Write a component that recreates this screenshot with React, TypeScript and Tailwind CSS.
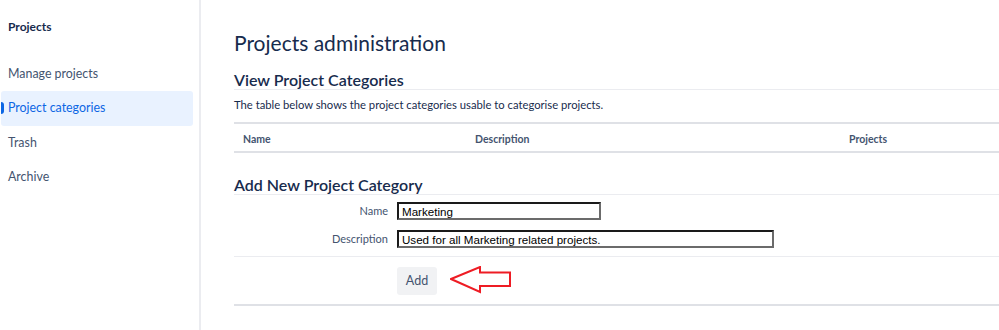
import React from 'react';

const navItems = ['Manage projects', 'Project categories', 'Trash', 'Archive'];

function Sidebar() {
  return (
    <aside className="w-[201px] shrink-0 border-r-2 border-[#ebecf0] pr-[6px]">
      <h2 className="pl-2 pt-[18px] text-[12px] font-bold text-[#172b4d]">Projects</h2>
      <nav className="mt-[21px] flex flex-col">
        {navItems.map((item) => {
          const active = item === 'Project categories';
          return (
            <div
              key={item}
              className={
                active
                  ? 'relative ml-px flex h-[34.4px] items-center rounded-[3px] bg-[#e9f2ff] pl-[7px] text-[12.4px] text-[#0c66e4]'
                  : 'flex h-[34.4px] items-center pl-2 text-[12.4px] text-[#44546f]'
              }
            >
              {active && <span className="absolute left-0 top-[11px] h-[12px] w-[3px] rounded-r-sm bg-[#0c66e4]" />}
              {item}
            </div>
          );
        })}
      </nav>
    </aside>
  );
}

function AddArrow() {
  return (
    <svg width="64" height="30" viewBox="0 0 64 30" className="ml-[13px]">
      <polygon
        points="1,13 30,1 30,6.5 60,6.5 60,20 30,20 30,26"
        fill="none"
        stroke="#ee1c24"
        strokeWidth="2"
        strokeLinejoin="miter"
      />
    </svg>
  );
}

const inputCls =
  "h-[18px] border-2 border-t-[#1a1a1a] border-l-[#1a1a1a] border-b-[#6b6b6b] border-r-[#6b6b6b] pl-[3px] pr-[2px] font-['Liberation_Sans',Arial,sans-serif] text-[11.6px] text-black outline-none";

export default function App() {
  return (
    <div className="flex h-[330px] w-[999px] overflow-hidden bg-white font-['Lato','Open_Sans',sans-serif] text-[#172b4d]">
      <Sidebar />
      <main className="flex-1 pl-[33px]">
        <h1 className="pt-[29px] text-[21px] leading-[28px] text-[#172b4d]">Projects administration</h1>

        {/* View categories */}
        <h2 className="mt-[13px] border-b border-[#ebecf0] text-[16px] font-semibold leading-[19px]">
          View Project Categories
        </h2>
        <p className="pt-[7px] text-[11.25px] leading-[16px]">
          The table below shows the project categories usable to categorise projects.
        </p>
        <table className="mt-[9px] w-full border-y-2 border-[#dfe1e6] text-left text-[10.5px] text-[#44546f]">
          <thead>
            <tr className="h-[29px]">
              <th className="w-[241px] pl-[9px] pt-[5px] font-bold">Name</th>
              <th className="w-[374px] pt-[5px] font-bold">Description</th>
              <th className="pt-[5px] font-bold">Projects</th>
            </tr>
          </thead>
        </table>

        {/* Add category */}
        <h2 className="mt-[22px] border-b border-[#ebecf0] text-[16px] font-semibold leading-[19px]">
          Add New Project Category
        </h2>
        <div className="flex flex-col gap-[10px] pt-[7px] pb-[8px]">
          <div className="flex items-center">
            <label className="w-[163px] pr-[9px] text-right text-[11px] text-[#44546f]">Name</label>
            <input defaultValue="Marketing" className={`${inputCls} w-[204px]`} />
          </div>
          <div className="flex items-center">
            <label className="w-[163px] pr-[9px] text-right text-[11px] text-[#44546f]">Description</label>
            <input defaultValue="Used for all Marketing related projects." className={`${inputCls} w-[377px]`} />
          </div>
        </div>
        <div className="flex items-center border-t border-b-2 border-t-[#ebecf0] border-b-[#dfe1e6] pl-[163px] pt-[9px] pb-[8px]">
          <button className="h-[28px] w-[40px] rounded-[3px] bg-[#f1f2f4] text-[12.5px] text-[#44546f]">Add</button>
          <AddArrow />
        </div>
      </main>
    </div>
  );
}
